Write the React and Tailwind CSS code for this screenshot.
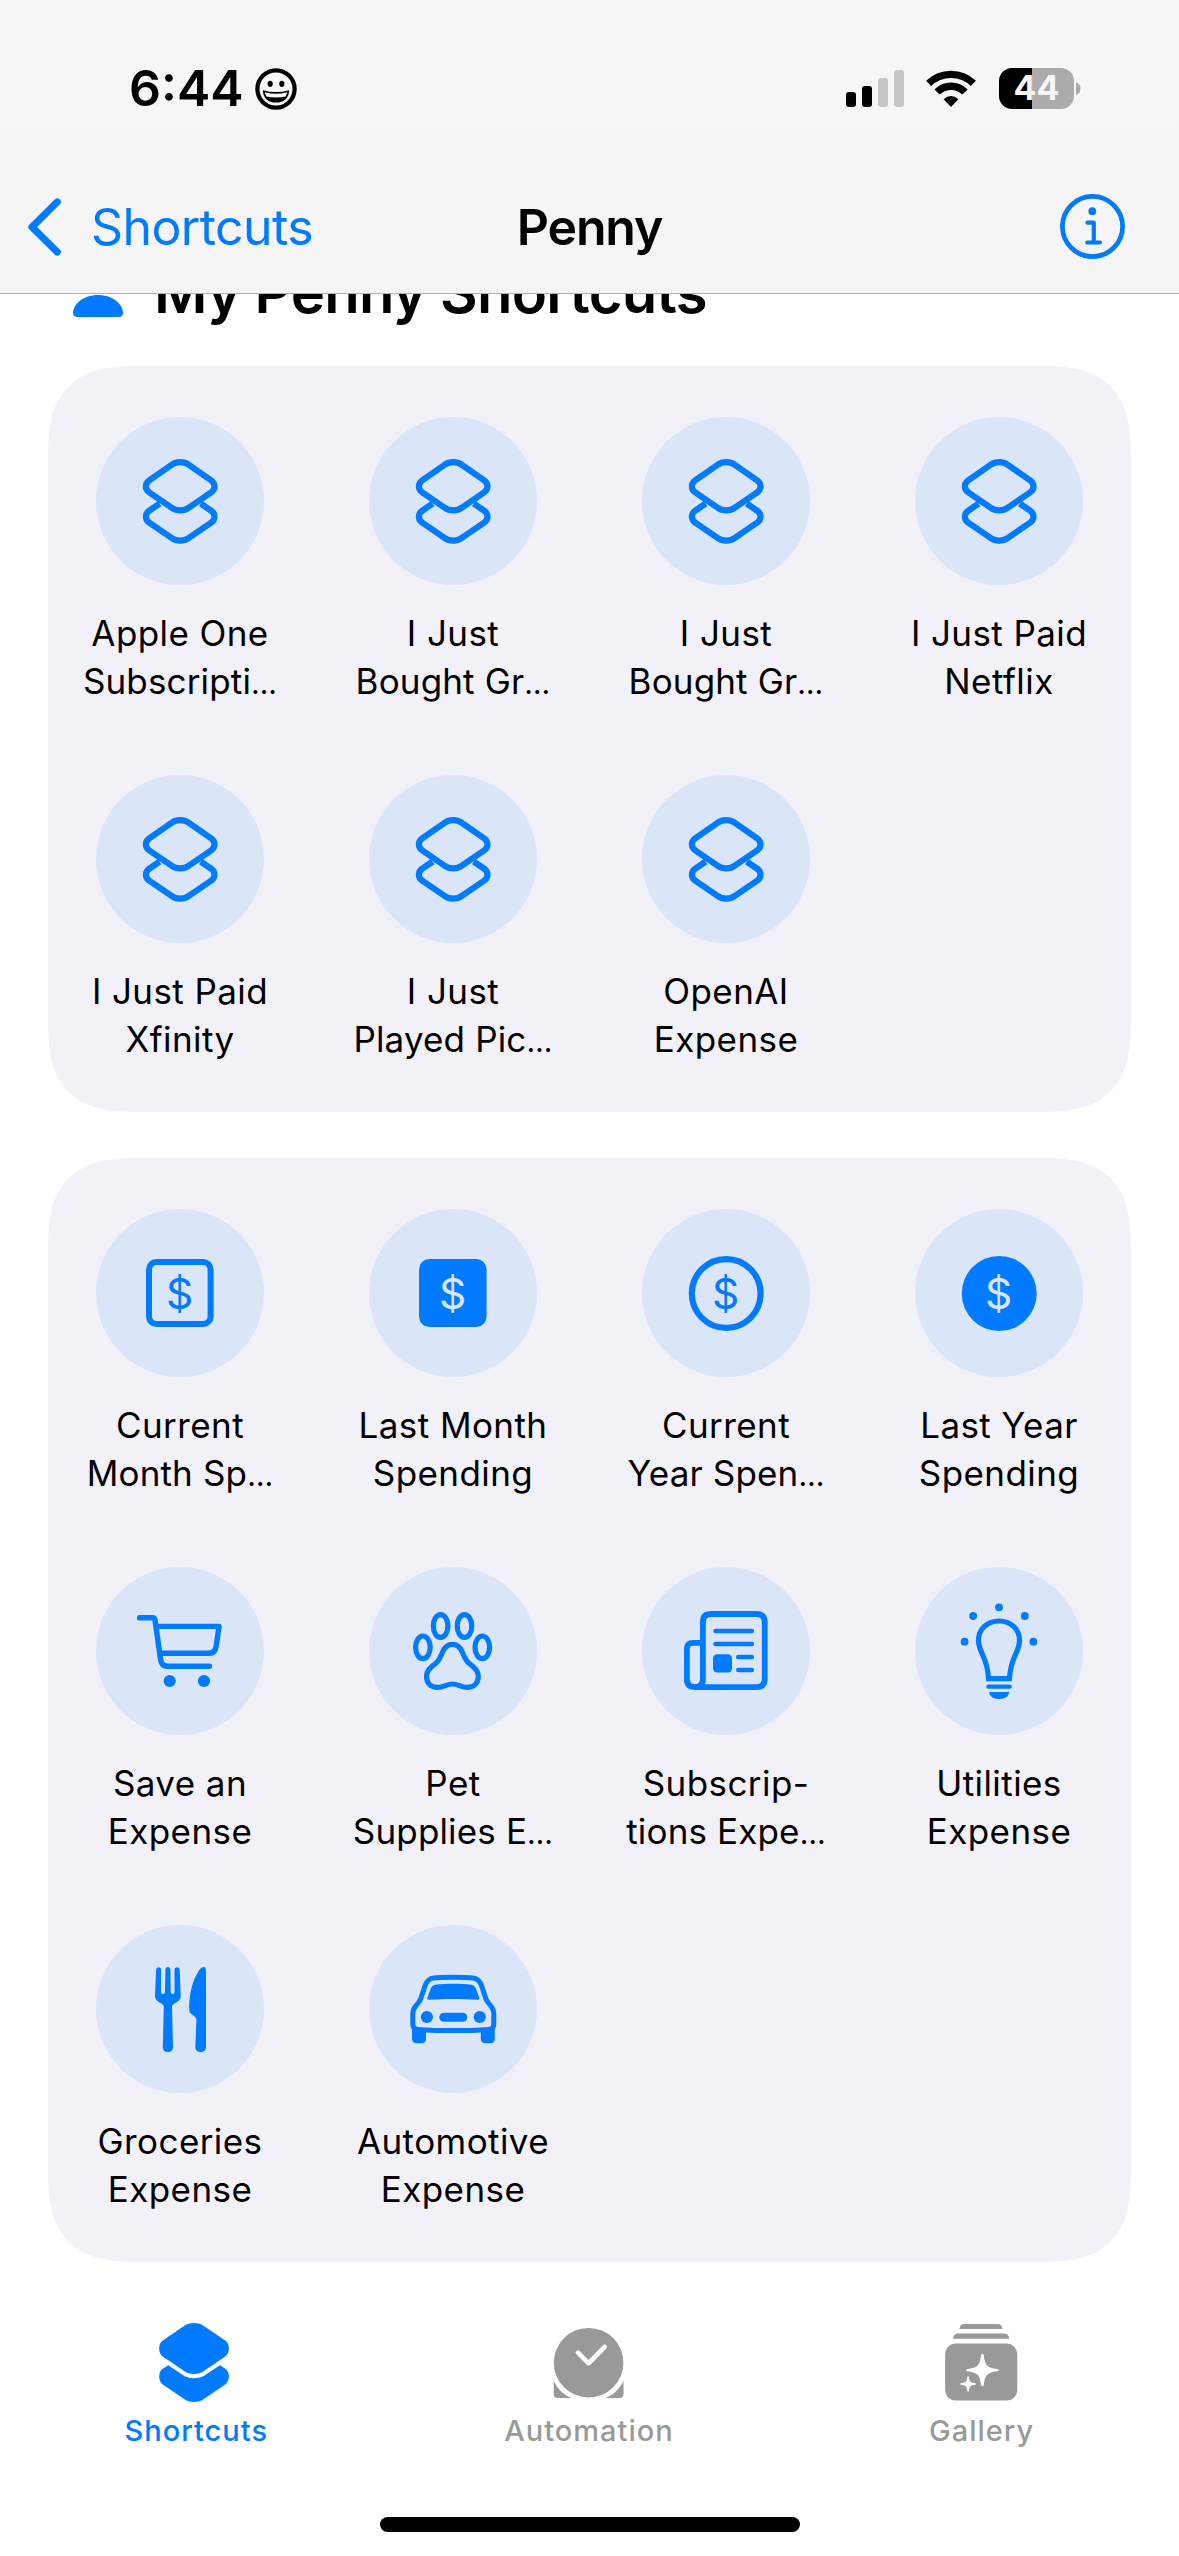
import React from "react";

const BLUE = "#007aff";
const TILE = "#dae5f7";
const DIAMOND_TOP =
  "M84.2 45.2C87.4 45.2 90.2 46 92.7 47.8L115 63.3C119.7 66.7 119.7 72.2 115 75.5L92.7 90.7C90.2 92.5 87.4 93.3 84.2 93.3C81 93.3 78.2 92.5 75.7 90.7L53.4 75.5C48.7 72.2 48.7 66.7 53.4 63.3L75.7 47.8C78.2 46 81 45.2 84.2 45.2Z";
const DIAMOND_BOTTOM =
  "M63.6 86.6L53.4 93.6C48.7 97 48.7 102.5 53.4 105.8L75.7 121C78.2 122.8 81 123.6 84.2 123.6C87.4 123.6 90.2 122.8 92.7 121L115 105.8C119.7 102.5 119.7 97 115 93.6L104.8 86.6";

function Dollar({ color }) {
  return (
    <text x="83.6" y="99.6" textAnchor="middle" fontSize="42.5" fontFamily="Inter, sans-serif" fill={color} stroke="none">
      $
    </text>
  );
}

const icons = {
  layers: (
    <g strokeWidth="6.2">
      <path d={DIAMOND_TOP} />
      <path d={DIAMOND_BOTTOM} />
    </g>
  ),
  square: (
    <>
      <rect x="53" y="53" width="61.6" height="62" rx="7.5" strokeWidth="6" />
      <Dollar color={BLUE} />
    </>
  ),
  squareFill: (
    <>
      <rect x="50" y="50" width="67.6" height="68" rx="10.5" fill={BLUE} stroke="none" />
      <Dollar color={TILE} />
    </>
  ),
  circle: (
    <>
      <circle cx="84.2" cy="84.5" r="34.4" strokeWidth="6.2" />
      <Dollar color={BLUE} />
    </>
  ),
  circleFill: (
    <>
      <circle cx="84.2" cy="84.5" r="37.5" fill={BLUE} stroke="none" />
      <Dollar color={TILE} />
    </>
  ),
  cart: (
    <g strokeWidth="5.4" strokeLinecap="round" strokeLinejoin="round">
      <path d="M43.6 50.7H56.5Q58.8 50.7 59 53L64.5 92Q65.4 99.2 71.5 99.2H113.4" />
      <path d="M61.6 59.4H123L120.2 79Q119.2 86.2 113 86.2H65" />
      <circle cx="73.7" cy="114" r="6.1" fill={BLUE} stroke="none" />
      <circle cx="108" cy="114" r="6.1" fill={BLUE} stroke="none" />
    </g>
  ),
  paw: (
    <g strokeWidth="5.2">
      <ellipse cx="71.6" cy="59" rx="7.3" ry="11.4" />
      <ellipse cx="95.5" cy="59" rx="7.3" ry="11.4" />
      <ellipse cx="53.9" cy="80.3" rx="7.3" ry="11.3" />
      <ellipse cx="113.3" cy="80.3" rx="7.3" ry="11.3" />
      <path d="M83.4 77.3C88.5 77.3 91 80 93 84.5C95.2 89.5 96.2 93.2 100 96.3C104.5 100 109.3 103 109.3 109.2C109.3 116 105 120.4 98 120.4C92 120.4 89 117 83.4 117C77.8 117 74.8 120.4 68.8 120.4C61.8 120.4 57.5 116 57.5 109.2C57.5 103 62.3 100 66.8 96.3C70.6 93.2 71.6 89.5 73.8 84.5C75.8 80 78.3 77.3 83.4 77.3Z" />
    </g>
  ),
  newspaper: (
    <g strokeWidth="5.8">
      <path d="M52.5 120.1H114.5Q122.7 120.1 122.7 112V55.2Q122.7 47 114.5 47H69Q60.9 47 60.9 55.2V112Q60.9 120.1 52.9 120.1Q44.9 120.1 44.9 112V82Q44.9 75.9 51 75.9H60.9" />
      <path d="M73.5 64H109.9M73.5 77H109.9M96.2 90H109.9M96.2 103H109.9" strokeWidth="4.4" strokeLinecap="round" />
      <rect x="71" y="87.3" width="19" height="18.2" rx="4.2" fill={BLUE} stroke="none" />
    </g>
  ),
  bulb: (
    <g strokeWidth="5.2">
      <path d="M73.6 111.7C72.8 101.5 71 95 67.9 88.5C65.5 83.3 63.5 79 63.5 73.5C63.5 62 72.3 54 84 54C95.7 54 104.5 62 104.5 73.5C104.5 79 102.5 83.3 100.1 88.5C97 95 95.2 101.5 94.4 111.7Z" />
      <path d="M73.4 119.7H94.6" strokeWidth="4.3" strokeLinecap="round" />
      <g fill={BLUE} stroke="none">
        <path d="M74 125H94.2Q93.4 132 84 132Q74.8 132 74 125Z" />
        <circle cx="84" cy="40.3" r="3.9" />
        <circle cx="58.2" cy="49" r="3.9" />
        <circle cx="109.8" cy="49" r="3.9" />
        <circle cx="49.6" cy="74.7" r="3.9" />
        <circle cx="118.4" cy="74.7" r="3.9" />
      </g>
    </g>
  ),
  fork: (
    <g fill={BLUE} stroke="none">
      <path d="M60.1 45Q60.3 42.3 62.7 42.3Q65 42.3 65 45V67Q65 69 67 69Q69 69 69 67L69.4 44.8Q69.6 42 71.9 42Q74.2 42 74.4 44.8L74.7 67Q74.8 69 76.7 69Q78.6 69 78.6 67L78.4 45Q78.6 42.3 81 42.3Q83.5 42.3 83.7 45L84.7 71C84.7 78 76 77.5 76 81.5L77 122Q77 127 71.9 127Q66.8 127 66.8 122L67.8 81.5C67.8 77.5 59 78 59 71Z" />
      <path d="M110 46V122Q110 127 104.8 127Q99.3 127 99.3 122L100.4 94.8Q100.4 93 98.4 91.3L94.8 88.6Q93 87.3 93.1 84C93.3 68 96.5 55 103.3 45Q105.3 42 107.5 42Q110 42 110 46Z" />
    </g>
  ),
  car: (
    <g strokeWidth="5">
      <path d="M84.3 52.3C74 52.3 68 52.5 64.5 53C60.3 53.5 58 56 56.5 59.5L51.8 73.5Q51.1 75.6 49.5 77.5C46 81.7 43.8 84 43.8 89V99Q43.8 104 48.4 104.4C60 105.2 72 105.6 84.3 105.6C96.6 105.6 108.6 105.2 120.2 104.4Q124.8 104 124.8 99V89C124.8 84 122.6 81.7 119.1 77.5Q117.5 75.6 116.8 73.5L112.1 59.5C110.6 56 108.3 53.5 104.1 53C100.6 52.5 94.6 52.3 84.3 52.3Z" />
      <g fill={BLUE} stroke="none">
        <path d="M59.8 74.8Q57.8 74.8 58.4 72.8L61.8 63.3Q63 60.3 65.8 59.8C77 58.4 91.6 58.4 102.8 59.8Q105.8 60.3 106.8 63.3L110.3 72.8Q110.8 74.8 108.8 74.8C93 73.8 75 73.8 59.8 74.8Z" />
        <circle cx="57.9" cy="92" r="6.1" />
        <circle cx="110.8" cy="92" r="6.1" />
        <rect x="70.3" y="87.8" width="28" height="9" rx="4.5" />
        <path d="M43 103Q46 104.6 57 104.9V113.5Q57 118.3 52.3 118.3H47.7Q43 118.3 43 113.5Z" />
        <path d="M125.8 103Q122.8 104.6 111.8 104.9V113.5Q111.8 118.3 116.5 118.3H121.1Q125.8 118.3 125.8 113.5Z" />
      </g>
    </g>
  ),
};

const groups = [
  [
    ["layers", "Apple One", "Subscripti…"],
    ["layers", "I Just", "Bought Gr…"],
    ["layers", "I Just", "Bought Gr…"],
    ["layers", "I Just Paid", "Netflix"],
    ["layers", "I Just Paid", "Xfinity"],
    ["layers", "I Just", "Played Pic…"],
    ["layers", "OpenAI", "Expense"],
  ],
  [
    ["square", "Current", "Month Sp…"],
    ["squareFill", "Last Month", "Spending"],
    ["circle", "Current", "Year Spen…"],
    ["circleFill", "Last Year", "Spending"],
    ["cart", "Save an", "Expense"],
    ["paw", "Pet", "Supplies E…"],
    ["newspaper", "Subscrip-", "tions Expe…"],
    ["bulb", "Utilities", "Expense"],
    ["fork", "Groceries", "Expense"],
    ["car", "Automotive", "Expense"],
  ],
];

function Line({ text }) {
  const cut = text.endsWith("…");
  return (
    <span className={`block h-[48px] whitespace-nowrap ${cut ? "tracking-[0.15px]" : "tracking-[0.42px]"}`}>
      {cut ? text.slice(0, -1) : text}
      {cut && <span className="text-[30px]">…</span>}
    </span>
  );
}

function Shortcut({ icon, lines }) {
  return (
    <div className="flex flex-col items-center gap-6">
      <div className="h-[168px] w-[168px] rounded-full bg-[#dae5f7]">
        <svg viewBox="0 0 168 168" className="h-full w-full" fill="none" stroke={BLUE}>
          {icons[icon]}
        </svg>
      </div>
      <div className="text-center text-[35px] leading-[48px] text-black">
        {lines.map((l, i) => (
          <Line key={i} text={l} />
        ))}
      </div>
    </div>
  );
}

function StatusBar() {
  return (
    <div className="flex h-[160px] items-center justify-between pt-[17px] pr-[98px] pl-[129px]">
      <div className="flex items-center gap-[11px]">
        <span className="-mt-[2px] text-[50px] leading-none font-semibold">6:44</span>
        <svg width="42" height="42" viewBox="0 0 42 42">
          <circle cx="21" cy="21" r="18.6" fill="none" stroke="#000" strokeWidth="4.2" />
          <ellipse cx="15.2" cy="15.8" rx="2.6" ry="3.1" />
          <ellipse cx="26.8" cy="15.8" rx="2.6" ry="3.1" />
          <path d="M7.9 22.2Q21 26 34.1 22.2C34.1 30 29 34.6 21 34.6S7.9 30 7.9 22.2Z" />
          <path d="M9.8 24.2Q21 27.2 32.2 24.2Q31.8 26.6 30.6 28.4Q21 30.4 11.4 28.4Q10.2 26.6 9.8 24.2Z" fill="#f6f6f6" />
        </svg>
      </div>
      <div className="-mt-[1px] flex items-center">
        <div className="flex h-[37px] items-end gap-[6px]">
          <i className="h-[15px] w-[10px] rounded-[3px] bg-black" />
          <i className="h-[21px] w-[10px] rounded-[3px] bg-black" />
          <i className="h-[29px] w-[10px] rounded-[3px] bg-[#c6c6c6]" />
          <i className="h-[37px] w-[10px] rounded-[3px] bg-[#c6c6c6]" />
        </div>
        <svg width="50" height="37" viewBox="0 0 50 37" className="ml-[22px]" fill="none" stroke="#000" strokeWidth="7.4">
          <path d="M2.6 13.4A32.2 32.2 0 0 1 47.4 13.4" />
          <path d="M11 22A19.8 19.8 0 0 1 39 22" />
          <path d="M17.6 29.2Q25 22.6 32.4 29.2L25 37Z" fill="#000" stroke="none" />
        </svg>
        <div className="ml-[23px] flex h-[41px] w-[75px] items-center justify-center rounded-[13px] bg-linear-to-r from-black from-44% to-[#ababab] to-44%">
          <span className="text-[34px] leading-none font-bold text-[#f6f6f6]">44</span>
        </div>
        <svg width="5" height="13" viewBox="0 0 5 13" className="ml-[2px]">
          <path d="M0 0Q4.5 2 4.5 6.5Q4.5 11 0 13Z" fill="#ababab" />
        </svg>
      </div>
    </div>
  );
}

function NavBar() {
  return (
    <div className="grid h-[133px] grid-cols-3 items-center text-[50px] leading-none">
      <div className="flex items-center gap-[30px] pl-[28px] text-[#007aff]">
        <svg width="33" height="58" viewBox="0 0 33 58" fill="none" stroke="currentColor" strokeWidth="7.2" strokeLinecap="round" strokeLinejoin="round">
          <path d="M29.2 4L4 29L29.2 54" />
        </svg>
        <span className="tracking-[-0.6px]">Shortcuts</span>
      </div>
      <span className="text-center font-semibold tracking-[-1.1px]">Penny</span>
      <div className="flex justify-end pr-[54px]">
        <svg width="65" height="65" viewBox="0 0 65 65" fill="none" stroke={BLUE} strokeWidth="4.7" strokeLinecap="round" strokeLinejoin="round">
          <circle cx="32.5" cy="32.5" r="30.1" />
          <path d="M27.5 28.7H33.8V48.5M27.3 48.5H40" strokeWidth="4.2" />
          <circle cx="32.3" cy="17.2" r="3.9" fill={BLUE} stroke="none" />
        </svg>
      </div>
    </div>
  );
}

const tabs = [
  {
    label: "Shortcuts",
    color: "text-[#007aff]",
    icon: (
      <>
        <path d="M38 1C42 1 45 2 47.5 3.7L69.6 18.7C74 21.8 74 30.8 69.6 34.2L47.5 49.2C45 51 42 52 38 52C34 52 31 51 28.5 49.2L6.4 34.2C2.1 30.8 2.1 21.8 6.4 18.7L28.5 3.7C31 2 34 1 38 1Z" />
        <path d="M12.3 43.3L6.4 47C2.1 50 2.1 58.8 6.4 62.2L28.5 77.2C31 79 34 80 38 80C42 80 45 79 47.5 77.2L69.6 62.2C74 58.8 74 50 69.6 47L64 43.3L48.8 53.2C45.5 55.4 42 56.2 38 56.2C34 56.2 30.5 55.4 27.2 53.2Z" />
      </>
    ),
  },
  {
    label: "Automation",
    color: "text-[#999999]",
    icon: (
      <>
        <circle cx="39.6" cy="40.7" r="34.8" />
        <path d="M4.7 58.7C8 66 14 72.5 22.3 76H8.5Q4.7 76 4.7 72Z" />
        <path d="M74.5 58.7C71.2 66 65.2 72.5 56.9 76H70.7Q74.5 76 74.5 72Z" />
        <path d="M29 30.6L39.6 41.4L55.6 24.8" fill="none" stroke="#fff" strokeWidth="4.6" strokeLinecap="round" strokeLinejoin="round" />
      </>
    ),
  },
  {
    label: "Gallery",
    color: "text-[#999999]",
    icon: (
      <>
        <path d="M17.5 7Q18 2 22.5 2H55.4Q59.9 2 60.4 7Z" />
        <path d="M10.9 16.7Q11.9 11.6 16.4 11.6H61.9Q66.4 11.6 67.4 16.7Z" />
        <rect x="3.1" y="21.6" width="72.2" height="57" rx="10.5" />
        <g fill="#fff">
          <path d="M40.4 31.8Q41.5 31.8 41.8 33.4C43.1 43.3 44.6 45.4 55.4 46.9Q57 47.2 57 48.1Q57 49 55.4 49.3C44.6 50.8 43.1 53.2 41.8 62.8Q41.5 64.3 40.4 64.3Q39.3 64.3 39 62.8C37.7 53.2 36.2 50.8 25.4 49.3Q23.8 49 23.8 48.1Q23.8 47.2 25.4 46.9C36.2 45.4 37.7 43.3 39 33.4Q39.3 31.8 40.4 31.8Z" />
          <path d="M26.1 54Q26.7 54 26.8 54.8C27.4 59.6 28.2 60.6 33.2 61.3Q34.1 61.5 34.1 62Q34.1 62.5 33.2 62.7C28.2 63.4 27.4 64.4 26.8 69.2Q26.7 70 26.1 70Q25.5 70 25.4 69.2C24.8 64.4 24 63.4 19 62.7Q18.1 62.5 18.1 62Q18.1 61.5 19 61.3C24 60.6 24.8 59.6 25.4 54.8Q25.5 54 26.1 54Z" />
        </g>
      </>
    ),
  },
];

export default function App() {
  return (
    <div className="flex h-[2556px] w-[1179px] flex-col overflow-hidden bg-white font-['Inter',sans-serif] text-black">
      <header className="h-[294px] shrink-0 border-b border-[#b2b2b2] bg-linear-to-b from-[#f7f7f7] to-[#f4f4f5]">
        <StatusBar />
        <NavBar />
      </header>

      <div className="flex h-[72px] shrink-0 items-start overflow-hidden pl-[73px]">
        <svg width="50" height="23" viewBox="0 0 50 23" className="mr-[31px] shrink-0">
          <path d="M25 1C40 1 50 10.5 50 19Q50 23 45 23H5Q0 23 0 19C0 10.5 10 1 25 1Z" fill={BLUE} />
        </svg>
        <h2 className="-mt-[31px] text-[58px] leading-[58px] font-semibold tracking-[-0.75px] whitespace-nowrap">My Penny Shortcuts</h2>
      </div>

      <main className="flex shrink-0 flex-col gap-[46px] px-[48px]">
        {groups.map((items, i) => (
          <section
            key={i}
            className="grid grid-cols-4 gap-x-[57px] gap-y-[70px] rounded-[72px] bg-[#f2f1f7] px-[24px] pt-[51px] pb-[49px] supports-[corner-shape:squircle]:rounded-[94px] supports-[corner-shape:squircle]:[corner-shape:superellipse(1.5)]"
          >
            {items.map(([icon, ...lines], j) => (
              <Shortcut key={j} icon={icon} lines={lines} />
            ))}
          </section>
        ))}
      </main>

      <nav className="grid grid-cols-3 pt-[60px] pr-[1px]">
        {tabs.map((t) => (
          <div key={t.label} className={`flex flex-col items-center gap-[11px] ${t.color}`}>
            <svg width="80" height="80" viewBox="0 0 80 80" fill="currentColor">
              {t.icon}
            </svg>
            <span className="text-[29px] leading-[36px] font-medium tracking-[1px]">{t.label}</span>
          </div>
        ))}
      </nav>
      <div className="mt-auto mb-[24px] h-[15px] w-[420px] shrink-0 self-center rounded-full bg-black" />
    </div>
  );
}
